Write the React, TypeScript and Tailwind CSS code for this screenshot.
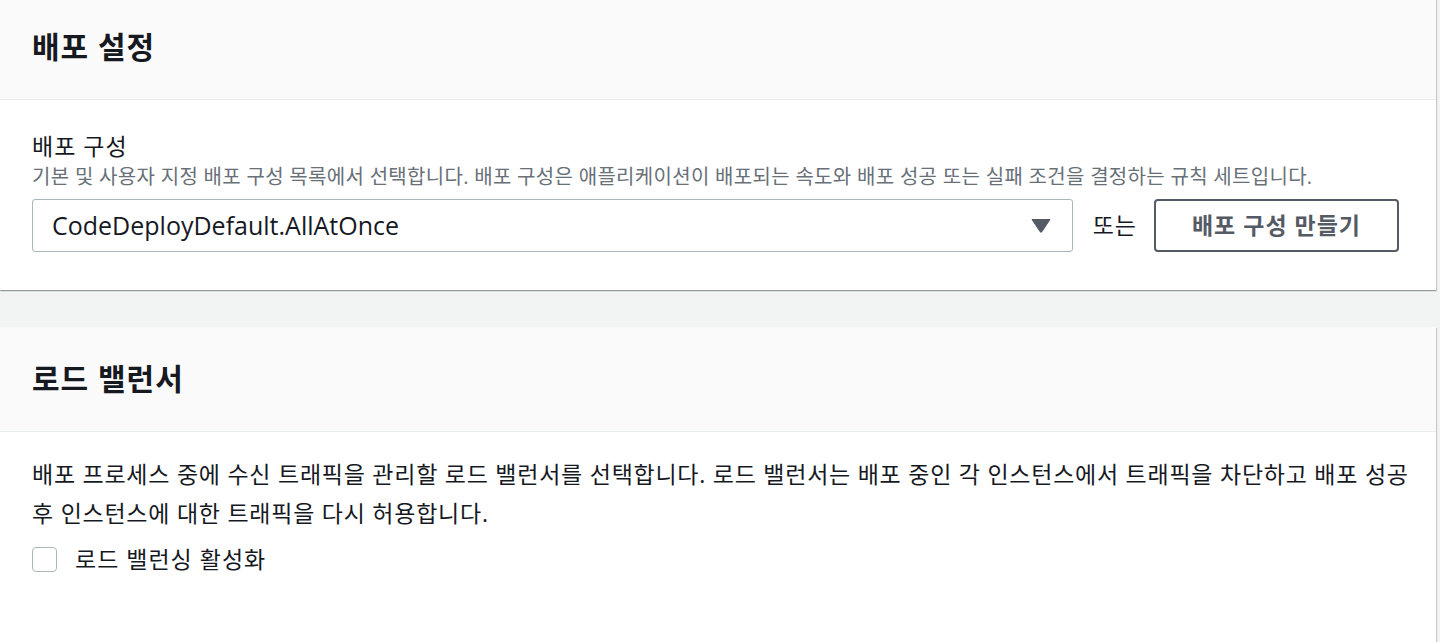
const font = { fontFamily: '"Open Sans", "Noto Sans CJK KR", sans-serif' };

function CardHeader({ title }: { title: string }) {
  return (
    <div className="flex h-[105px] items-center border-b border-[#eaeded] bg-[#fafafa] px-8">
      <h2 className="text-[30px] font-bold leading-[36px] tracking-[1px] text-[#16191f]">{title}</h2>
    </div>
  );
}

export default function App() {
  return (
    <div className="min-h-[642px] overflow-hidden bg-[#f2f3f3] text-[#16191f]" style={font}>
      {/* 배포 설정 */}
      <section className="-mt-[5px] w-[1436px] bg-white shadow-[0_1px_1px_0_rgba(0,28,36,0.3),1px_1px_1px_0_rgba(0,28,36,0.15)]">
        <CardHeader title="배포 설정" />
        <div className="px-8 pt-[31px] pb-[38px]">
          <div className="text-[23px] leading-[30px] tracking-[1px]">배포 구성</div>
          <p className="mt-[4px] text-[20px] leading-[24px] tracking-[0.3px] text-[#687078]">
            기본 및 사용자 지정 배포 구성 목록에서 선택합니다. 배포 구성은 애플리케이션이 배포되는 속도와 배포 성공 또는 실패 조건을 결정하는 규칙 세트입니다.
          </p>
          <div className="mt-[10px] flex h-[53px] items-center pr-[5px]">
            <div className="flex h-[53px] flex-1 items-center justify-between rounded-[3px] border border-[#aab7b8] pl-[19px] pr-[21px]">
              <span className="text-[25px]">CodeDeployDefault.AllAtOnce</span>
              <svg width="20" height="15" viewBox="0 0 20 15" className="text-[#545b64]">
                <path d="M1 1.5 H19 L10.8 13.8 Q10 14.8 9.2 13.8 Z" fill="currentColor" stroke="currentColor" strokeWidth="1" strokeLinejoin="round" />
              </svg>
            </div>
            <span className="ml-[20px] text-[23px] tracking-[1px]">또는</span>
            <button className="ml-[17px] flex h-[53px] w-[245px] items-center justify-center rounded-[4px] border-2 border-[#545b64] text-[23px] font-bold tracking-[1px] text-[#545b64]">
              배포 구성 만들기
            </button>
          </div>
        </div>
      </section>

      {/* 로드 밸런서 */}
      <section className="mt-[37px] min-h-[320px] w-[1436px] bg-white shadow-[0_1px_1px_0_rgba(0,28,36,0.3),1px_1px_1px_0_rgba(0,28,36,0.15)]">
        <CardHeader title="로드 밸런서" />
        <div className="pl-8 pr-[18px] pt-[23px]">
          <p className="text-[23px] leading-[39px] tracking-[0.75px]">
            배포 프로세스 중에 수신 트래픽을 관리할 로드 밸런서를 선택합니다. 로드 밸런서는 배포 중인 각 인스턴스에서 트래픽을 차단하고 배포 성공 후 인스턴스에 대한 트래픽을 다시 허용합니다.
          </p>
          <label className="mt-[13px] flex items-center">
            <span className="h-[25px] w-[25px] rounded-[4px] border-[1.5px] border-[#aab7b8] bg-white" />
            <span className="ml-[18px] text-[23px] leading-[26px] tracking-[1px]">로드 밸런싱 활성화</span>
          </label>
        </div>
      </section>
    </div>
  );
}
